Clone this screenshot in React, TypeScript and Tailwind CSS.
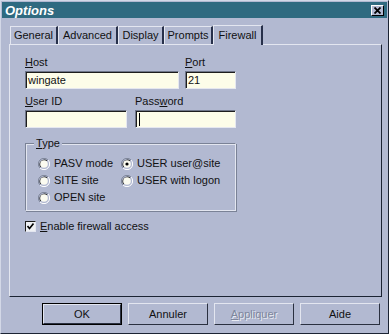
import React from "react";

const font = { fontFamily: '"Liberation Sans", Arial, sans-serif' };

function Radio({ checked, label }: { checked?: boolean; label: string }) {
  return (
    <div className="flex items-center h-[17px]">
      <svg width="12" height="12" viewBox="0 0 12 12" className="shrink-0">
        <path d="M10 2 A5.5 5.5 0 0 0 2 10" fill="none" stroke="#7d8598" strokeWidth="1" />
        <path d="M2 10 A5.5 5.5 0 0 0 10 2" fill="none" stroke="#ffffff" strokeWidth="1" />
        <path d="M9 3 A4.3 4.3 0 0 0 3 9" fill="none" stroke="#1a1a1a" strokeWidth="1.2" />
        <circle cx="6" cy="6" r="3.8" fill="#fbfbf0" />
        {checked && <circle cx="6" cy="6" r="1.6" fill="#000" />}
      </svg>
      <span className="ml-[4px] text-[11px] text-[#111] leading-none">{label}</span>
    </div>
  );
}

function Input({ value, w, caret }: { value?: string; w: string; caret?: boolean }) {
  return (
    <div
      className={`${w} h-[18px] bg-[#fdfde9] border-t border-l border-t-[#6f7689] border-l-[#6f7689] border-b border-r border-b-[#e6e8f0] border-r-[#e6e8f0] flex items-center`}
    >
      <div className="w-full h-full border-t border-l border-t-[#1d1d1d] border-l-[#1d1d1d] flex items-center pl-[1px] text-[11px] text-[#111]">
        {caret && <span className="w-[1px] h-[13px] bg-black ml-[1px]" />}
        {value}
      </div>
    </div>
  );
}

function Button({ children, def, disabled }: { children: React.ReactNode; def?: boolean; disabled?: boolean }) {
  return (
    <div className={`w-[80px] h-[22px] ${def ? "border border-black" : ""} flex`}>
      <div className="flex-1 flex items-center justify-center border-t border-l border-t-[#e3e6f0] border-l-[#e3e6f0] border-b border-r border-b-[#2a3040] border-r-[#2a3040]">
        <span
          className={`text-[11px] ${disabled ? "text-[#7e869c] [text-shadow:1px_1px_0_#e8ebf3]" : "text-[#111]"}`}
        >
          {children}
        </span>
      </div>
    </div>
  );
}

function Tab({ label, w, selected }: { label: string; w: string; selected?: boolean }) {
  if (selected) {
    return (
      <div
        className={`${w} h-[20px] -mb-[1px] relative z-10 bg-[#b2b9d1] border-t border-l border-t-[#e3e6f0] border-l-[#e3e6f0] border-r-2 border-r-[#27304a] flex items-center justify-center text-[11px] text-[#111]`}
      >
        {label}
      </div>
    );
  }
  return (
    <div
      className={`${w} h-[18px] border-t border-l border-t-[#e3e6f0] border-l-[#e3e6f0] border-r-2 border-r-[#27304a] flex items-center justify-center text-[11px] text-[#111]`}
    >
      {label}
    </div>
  );
}

export default function App() {
  return (
    <div
      style={font}
      className="w-[389px] h-[334px] bg-[#b2b9d1] border-t border-l border-t-[#d3d8e7] border-l-[#d3d8e7] border-b border-r border-b-[#1b2333] border-r-[#1b2333] flex flex-col overflow-hidden"
    >
      {/* Title bar */}
      <div className="mx-[1px] mt-[1px] h-[16px] bg-[#2f6a80] flex items-center justify-between pl-[3px] pr-[3px]">
        <span className="text-white text-[13px] font-bold italic leading-none">Options</span>
        <div className="w-[13px] h-[11px] bg-[#b2b9d1] border-t border-l border-t-white border-l-white border-b border-r border-b-black border-r-black flex items-center justify-center">
          <svg width="7" height="7" viewBox="0 0 7 7">
            <path d="M0.5 0.5 L6.5 6.5 M6.5 0.5 L0.5 6.5" stroke="#000" strokeWidth="1.8" />
          </svg>
        </div>
      </div>

      {/* Tabs */}
      <div className="flex items-end ml-[9px] mt-[6px] h-[20px]">
        <Tab label="General" w="w-[48px]" />
        <Tab label="Advanced" w="w-[60px]" />
        <Tab label="Display" w="w-[46px]" />
        <Tab label="Prompts" w="w-[49px]" />
        <Tab label="Firewall" w="w-[50px]" selected />
      </div>

      {/* Panel */}
      <div className="ml-[8px] w-[373px] h-[253px] border-t border-l border-t-[#e3e6f0] border-l-[#e3e6f0] border-b border-r border-b-[#1b2333] border-r-[#1b2333] pl-[15px] pt-[10px]">
        <div className="flex gap-[6px]">
          <div className="flex flex-col">
            <span className="text-[11px] text-[#111] h-[16px] leading-[14px]"><u>H</u>ost</span>
            <Input value="wingate" w="w-[154px]" />
          </div>
          <div className="flex flex-col">
            <span className="text-[11px] text-[#111] h-[16px] leading-[14px]"><u>P</u>ort</span>
            <Input value="21" w="w-[51px]" />
          </div>
        </div>
        <div className="flex gap-[8px] mt-[5px]">
          <div className="flex flex-col">
            <span className="text-[11px] text-[#111] h-[16px] leading-[14px]"><u>U</u>ser ID</span>
            <Input w="w-[102px]" />
          </div>
          <div className="flex flex-col">
            <span className="text-[11px] text-[#111] h-[16px] leading-[14px]">Pass<u>w</u>ord</span>
            <Input w="w-[101px]" caret />
          </div>
        </div>

        {/* Type group */}
        <div className="relative mt-[15px] w-[211px] h-[68px] border border-t-[#7a8296] border-l-[#7a8296] border-b-[#e3e6f0] border-r-[#e3e6f0] shadow-[inset_1px_1px_0_#e3e6f0,1px_1px_0_#7a8296]">
          <span className="absolute -top-[8px] left-[8px] px-[2px] bg-[#b2b9d1] text-[11px] text-[#111] leading-[14px]">
            <u>T</u>ype
          </span>
          <div className="flex pl-[12px] pt-[11px]">
            <div className="flex flex-col w-[83px]">
              <Radio label="PASV mode" />
              <Radio label="SITE site" />
              <Radio label="OPEN site" />
            </div>
            <div className="flex flex-col">
              <Radio label="USER user@site" checked />
              <Radio label="USER with logon" />
            </div>
          </div>
        </div>

        {/* Checkbox */}
        <div className="flex items-center mt-[7px]">
          <div className="w-[11px] h-[11px] bg-[#eef0f4] border-t border-l border-t-[#1d1d1d] border-l-[#1d1d1d] border-b border-r border-b-[#e3e6f0] border-r-[#e3e6f0] flex items-center justify-center">
            <svg width="7" height="7" viewBox="0 0 7 7">
              <path d="M0.5 3 L2.5 5.5 L6.5 0.5" fill="none" stroke="#000" strokeWidth="1.6" />
            </svg>
          </div>
          <span className="ml-[4px] text-[11px] text-[#111]"><u>E</u>nable firewall access</span>
        </div>
      </div>

      {/* Buttons */}
      <div className="flex justify-end gap-[6px] pr-[8px] mt-[6px]">
        <Button def>OK</Button>
        <Button>Annuler</Button>
        <Button disabled><u>A</u>ppliquer</Button>
        <Button>Aide</Button>
      </div>
    </div>
  );
}
